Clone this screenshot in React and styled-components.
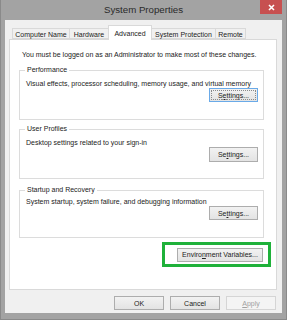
import React from 'react';
import styled, { createGlobalStyle } from 'styled-components';

const Global = createGlobalStyle`
    html, body { margin:0; padding:0; background:#fff; }
    body { font-family: "Liberation Sans", Arial, sans-serif; }
`

const Window = styled.div`
    width:287px;
    height:320px;
    box-sizing:border-box;
    background:#a3a3a3;
    border:1px solid #8a8a8a;
    border-top:none;
    padding:0 4px 6px 4px;
    display:flex;
    flex-direction:column;
`

const TitleBar = styled.div`
    height:20px;
    display:grid;
    grid-template-columns:1fr auto 1fr;
    align-items:start;
    .title {
        grid-column:2;
        font-size:9.7px;
        line-height:20px;
        color:#2a2a2a;
    }
`

const CloseBtn = styled.div`
    grid-column:3;
    justify-self:end;
    width:22px;
    height:14px;
    background:#c75050;
    display:flex;
    align-items:center;
    justify-content:center;
`

const Client = styled.div`
    flex:1;
    background:#f0f0f0;
    display:flex;
    flex-direction:column;
    padding:5px 6px 0 4px;
    font-size:7px;
    color:#222;
`

const TabRow = styled.div`
    display:flex;
    align-items:flex-end;
    height:14px;
    padding-left:3px;
    position:relative;
    z-index:2;
`

const Tab = styled.div`
    box-sizing:border-box;
    width:${p => p.w}px;
    height:${p => p.active ? 15 : 11}px;
    margin-right:-1px;
    margin-bottom:${p => p.active ? -1 : 0}px;
    border:1px solid #d9d9d9;
    border-bottom:${p => p.active ? 'none' : '1px solid #d9d9d9'};
    background:${p => p.active ? '#fff' : '#f0f0f0'};
    display:flex;
    align-items:center;
    justify-content:center;
    padding-top:${p => p.active ? 0 : 1}px;
    white-space:nowrap;
    position:relative;
    z-index:${p => p.active ? 2 : 1};
`

const Pane = styled.div`
    box-sizing:border-box;
    width:268px;
    height:251px;
    background:#fff;
    border:1px solid #d9d9d9;
    display:flex;
    flex-direction:column;
    padding:0 12px 0 9px;
`

const Note = styled.div`
    margin:11px 0 0 3px;
    line-height:8px;
`

const Group = styled.fieldset`
    box-sizing:border-box;
    margin:${p => p.top}px 0 0 0;
    height:${p => p.h}px;
    border:1px solid #dcdcdc;
    padding:0 5px 0 6px;
    display:flex;
    flex-direction:column;
    legend {
        padding:0 2px;
        margin-left:-1px;
        line-height:8px;
    }
    .desc {
        margin-top:${p => p.gap}px;
        line-height:8px;
    }
    .foot {
        margin-top:auto;
        margin-bottom:6px;
        display:flex;
        justify-content:flex-end;
    }
`

const Button = styled.div`
    box-sizing:border-box;
    width:${p => p.w}px;
    height:${p => p.h || 14}px;
    border:1px solid ${p => p.focus ? '#6aaae8' : p.disabled ? '#d5d5d5' : '#adadad'};
    background:${p => p.disabled ? '#f4f4f4' : 'linear-gradient(#f2f2f2, #e3e3e3)'};
    color:${p => p.disabled ? '#a0a0a0' : '#222'};
    display:flex;
    align-items:center;
    justify-content:center;
    white-space:nowrap;
    position:relative;
    u { text-decoration:underline; text-underline-offset:1px; }
    &::after {
        content:'';
        display:${p => p.focus ? 'block' : 'none'};
        position:absolute;
        inset:1px;
        border:1px dotted #8a8a8a;
    }
`

const Highlight = styled.div`
    align-self:flex-end;
    box-sizing:border-box;
    width:109px;
    height:25px;
    margin:4px -7px 0 0;
    border:3px solid #1fb13a;
    display:flex;
    align-items:center;
    justify-content:flex-end;
    padding-right:5px;
`

const Actions = styled.div`
    display:flex;
    justify-content:flex-end;
    gap:6px;
    margin-top:6px;
`

const tabs = [
    { label: 'Computer Name', w: 58 },
    { label: 'Hardware', w: 40 },
    { label: 'Advanced', w: 44, active: true },
    { label: 'System Protection', w: 65 },
    { label: 'Remote', w: 31 },
];

export default () => {
    return(
        <>
            <Global />
            <Window>
                <TitleBar>
                    <span className="title">System Properties</span>
                    <CloseBtn>
                        <svg width="7" height="7" viewBox="0 0 7 7">
                            <path d="M1 1 L6 6 M6 1 L1 6" stroke="#fff" strokeWidth="1.6" />
                        </svg>
                    </CloseBtn>
                </TitleBar>
                <Client>
                    <TabRow>
                        {tabs.map(t => (
                            <Tab key={t.label} w={t.w} active={t.active}>{t.label}</Tab>
                        ))}
                    </TabRow>
                    <Pane>
                        <Note>You must be logged on as an Administrator to make most of these changes.</Note>
                        <Group top={7} h={54} gap={6}>
                            <legend>Performance</legend>
                            <div className="desc">Visual effects, processor scheduling, memory usage, and virtual memory</div>
                            <div className="foot">
                                <Button w={49} focus>S<u>e</u>ttings...</Button>
                            </div>
                        </Group>
                        <Group top={5} h={54} gap={6}>
                            <legend>User Profiles</legend>
                            <div className="desc">Desktop settings related to your sign-in</div>
                            <div className="foot">
                                <Button w={49} h={15}>Se<u>t</u>tings...</Button>
                            </div>
                        </Group>
                        <Group top={7} h={52} gap={4}>
                            <legend>Startup and Recovery</legend>
                            <div className="desc">System startup, system failure, and debugging information</div>
                            <div className="foot">
                                <Button w={49}>Se<u>t</u>tings...</Button>
                            </div>
                        </Group>
                        <Highlight>
                            <Button w={86}>Enviro<u>n</u>ment Variables...</Button>
                        </Highlight>
                    </Pane>
                    <Actions>
                        <Button w={50}>OK</Button>
                        <Button w={50}>Cancel</Button>
                        <Button w={50} disabled><u>A</u>pply</Button>
                    </Actions>
                </Client>
            </Window>
        </>
    );
}
